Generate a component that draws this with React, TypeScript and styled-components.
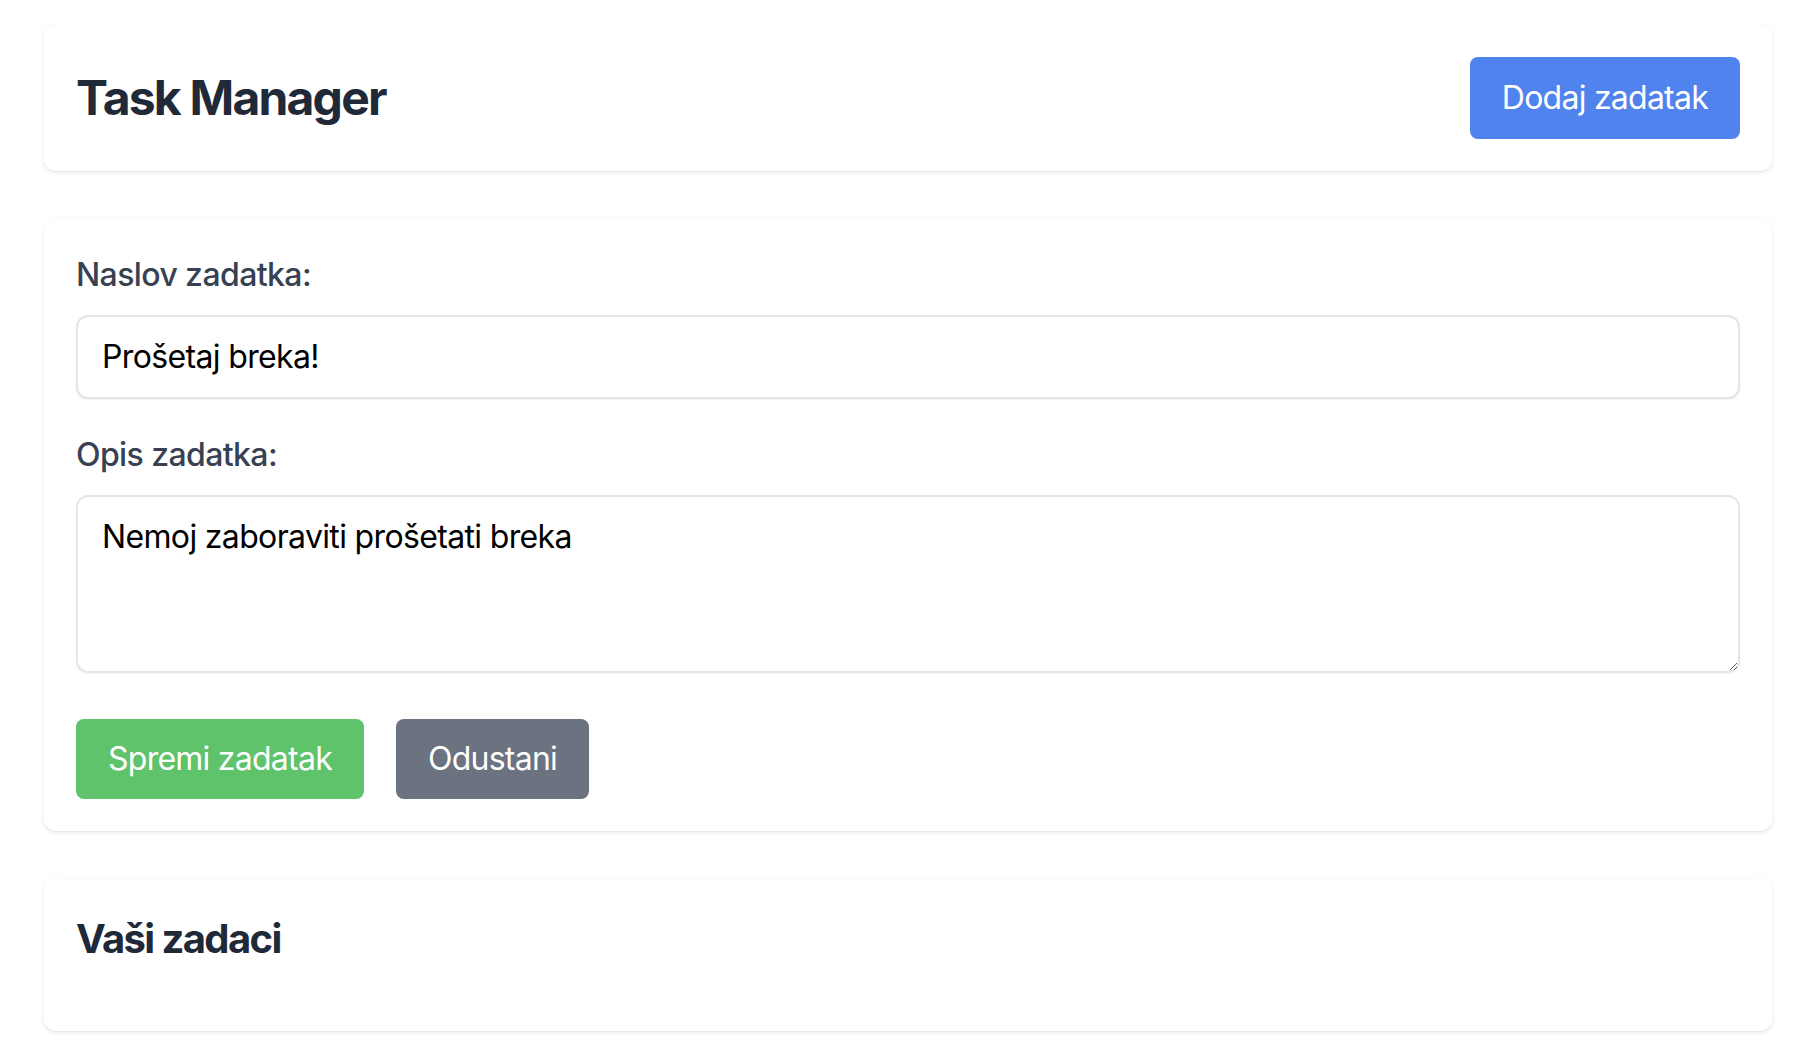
import React, { useState } from 'react'
import styled, { createGlobalStyle } from 'styled-components'

const GlobalStyle = createGlobalStyle`
  * { box-sizing: border-box; }
  body {
    margin: 0;
    background: #ffffff;
    font-family: Inter, "Noto Sans", "Liberation Sans", sans-serif;
    color: #1f2937;
  }
`

const App = () => {
  const [title, setTitle] = useState('Prošetaj breka!')
  const [desc, setDesc] = useState('Nemoj zaboraviti prošetati breka')

  return (
    <StyledPage>
      <GlobalStyle />
      <StyledHeader>
        <h1>Task Manager</h1>
        <Button variant="blue" tall>Dodaj zadatak</Button>
      </StyledHeader>

      <StyledCard>
        <Label htmlFor="title">Naslov zadatka:</Label>
        <Input id="title" value={title} onChange={(e) => setTitle(e.target.value)} />
        <Label htmlFor="desc">Opis zadatka:</Label>
        <TextArea id="desc" rows={3} value={desc} onChange={(e) => setDesc(e.target.value)} />
        <StyledActions>
          <Button variant="green">Spremi zadatak</Button>
          <Button variant="gray">Odustani</Button>
        </StyledActions>
      </StyledCard>

      <StyledCard>
        <h2>Vaši zadaci</h2>
        <StyledList></StyledList>
      </StyledCard>
    </StyledPage>
  )
}

export default App

const colors = {
  blue: '#5083ed',
  green: '#5ec36b',
  gray: '#6b7280',
}

const StyledPage = styled.div`
  padding: 25px 32px 24px 44px;
  display: flex;
  flex-direction: column;
  gap: 48px;
`

const StyledCard = styled.section`
  background: #fff;
  border-radius: 12px;
  box-shadow: 0 1px 2px rgba(0, 0, 0, 0.06), 0 2px 6px rgba(0, 0, 0, 0.07);
  padding: 32px;
  display: flex;
  flex-direction: column;

  h2 {
    margin: 0 0 32px;
    font-size: 40px;
    line-height: 56px;
    font-weight: 700;
    color: #1f2937;
    letter-spacing: -1.6px;
  }
`

const StyledHeader = styled(StyledCard)`
  flex-direction: row;
  align-items: center;
  justify-content: space-between;
  padding: 32px;

  h1 {
    margin: 0;
    font-size: 48px;
    line-height: 64px;
    font-weight: 700;
    color: #1f2937;
    letter-spacing: -1.8px;
  }
`

const Button = styled.button<{ variant: 'blue' | 'green' | 'gray'; tall?: boolean }>`
  border: none;
  border-radius: 8px;
  background: ${(p) => colors[p.variant]};
  color: #fff;
  font-family: inherit;
  font-size: 32px;
  line-height: 48px;
  padding: ${(p) => (p.tall ? '17px 32px' : '16px 32px')};
  cursor: pointer;
  letter-spacing: -0.75px;
`

const Label = styled.label`
  display: block;
  font-size: 32px;
  line-height: 48px;
  font-weight: 500;
  color: #374151;
  margin-bottom: 16px;
  letter-spacing: -0.6px;
`

const fieldStyles = `
  display: block;
  width: 100%;
  border: 2px solid #e5e5ea;
  border-radius: 12px;
  padding: 16px 24px;
  font-family: Inter, "Noto Sans", "Liberation Sans", sans-serif;
  font-size: 32px;
  line-height: 48px;
  color: #000;
  background: #fff;
  outline: none;
  box-shadow: 0 1px 2px rgba(0, 0, 0, 0.05);
  letter-spacing: -0.65px;
`

const Input = styled.input`
  ${fieldStyles}
  margin-bottom: 32px;
`

const TextArea = styled.textarea`
  ${fieldStyles}
  height: 178px;
  resize: vertical;
  margin-bottom: 46px;
`

const StyledActions = styled.div`
  display: flex;
  gap: 32px;
`

const StyledList = styled.ul`
  margin: 0;
  padding: 0;
  list-style: none;
`
